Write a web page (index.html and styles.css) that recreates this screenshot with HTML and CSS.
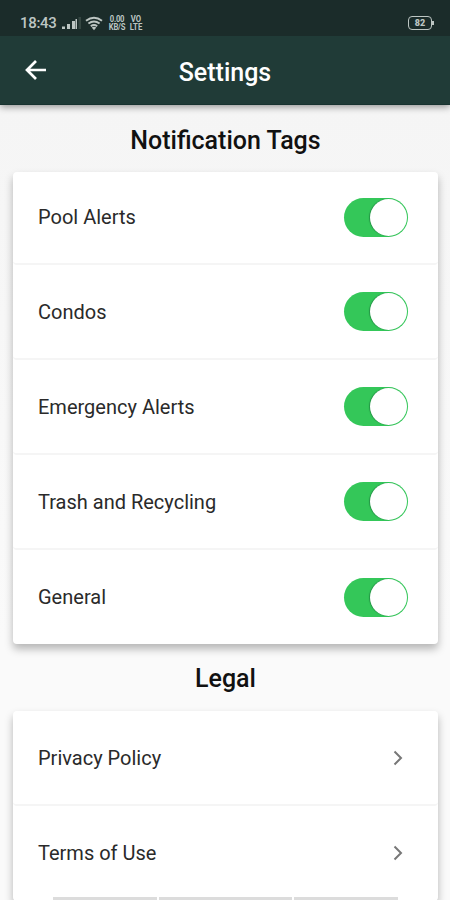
FILE: index.html
```html
<!DOCTYPE html>
<html lang="en">
<head>
<meta charset="utf-8">
<title>Settings</title>
<link rel="stylesheet" href="styles.css">
</head>
<body>
<div class="screen">
  <header class="header">
    <div class="status">
      <span class="clock">18:43</span>
      <svg class="signal" width="19" height="13" viewBox="0 0 19 13"><path d="M0 9.500h3V12H0zM5 7h3v5H5zM10 4h3v8h-3zM13.500 2H15v10h-1.500z" fill="#bdc6c3"/><path d="M16.500 0H19v12h-2.500z" fill="#354642"/></svg>
      <svg class="wifi" width="18" height="15" viewBox="0 0 18 15"><g fill="none" stroke="#bdc6c3" stroke-width="1.900"><path d="M1 4.800q8-6.200 16 0"/><path d="M3.400 7.600q5.600-4.400 11.200 0"/><path d="M5.800 10.200q3.200-2.500 6.400 0"/></g><path d="M6.700 11.400q2.300-1.500 4.600 0L9 14.200z" fill="#bdc6c3"/></svg>
      <span class="stack rate"><span>0.00</span><span>KB/S</span></span>
      <span class="stack volte"><span>VO</span><span>LTE</span></span>
      <span class="battery"><span class="level">82</span></span>
    </div>
    <div class="appbar">
      <svg class="back" width="22" height="22" viewBox="0 0 22 22"><path d="M21 11H2.500M11 2L2 11l9 9" fill="none" stroke="#fff" stroke-width="2.700"/></svg>
      <h1 class="title">Settings</h1>
    </div>
  </header>
  <main class="content">
    <h2 class="heading tags">Notification Tags</h2>
    <section class="card alerts">
      <div class="row"><span class="label">Pool Alerts</span><span class="toggle"></span></div>
      <div class="row"><span class="label">Condos</span><span class="toggle"></span></div>
      <div class="row"><span class="label">Emergency Alerts</span><span class="toggle"></span></div>
      <div class="row"><span class="label">Trash and Recycling</span><span class="toggle"></span></div>
      <div class="row"><span class="label">General</span><span class="toggle"></span></div>
    </section>
    <h2 class="heading legal">Legal</h2>
    <section class="card links">
      <div class="row"><span class="label">Privacy Policy</span><svg class="chevron" width="10" height="16" viewBox="0 0 10 16"><path d="M1.500 1.500L8 8l-6.500 6.500" fill="none" stroke="#777" stroke-width="2"/></svg></div>
      <div class="row"><span class="label">Terms of Use</span><svg class="chevron" width="10" height="16" viewBox="0 0 10 16"><path d="M1.500 1.500L8 8l-6.500 6.500" fill="none" stroke="#777" stroke-width="2"/></svg></div>
    </section>
  </main>
  <div class="tabs"><span></span><span></span><span></span></div>
</div>
</body>
</html>
```

FILE: styles.css
```css
* { box-sizing: border-box; }
body { margin: 0; font-family: Roboto, sans-serif; color: #2a2a2a; }
.screen { position: relative; width: 450px; height: 900px; overflow: hidden; background: linear-gradient(#f5f5f5 105px, #fafafa 640px); }
.header { position: relative; z-index: 1; height: 105px; background: #203b37; border-bottom: 1px solid #183330; box-shadow: 0 2px 7px rgba(0,0,0,.4); }
.status { display: flex; align-items: center; height: 36px; padding: 10px 18px 0 20px; background: #1b2c2a; color: #bdc6c3; }
.clock { width: 42px; font-size: 15px; font-weight: 500; letter-spacing: -.3px; }
.signal { margin-top: 1px; }
.wifi { margin-left: 4px; }
.stack { display: flex; flex-direction: column; align-items: center; font-size: 9px; font-weight: 700; line-height: 8px; }
.rate { width: 18px; margin-left: 5px; letter-spacing: -.3px; transform: scaleX(.85); }
.volte { width: 14px; margin-left: 3px; transform: scaleX(.86); }
.battery { position: relative; display: flex; align-items: center; justify-content: center; width: 24px; height: 14px; margin-left: auto; border: 1.500px solid #bdc6c3; border-radius: 4px; }
.battery::after { content: ""; position: absolute; right: -3px; top: 4px; width: 2px; height: 4px; background: #bdc6c3; }
.level { font-size: 9px; font-weight: 900; line-height: 10px; }
.appbar { display: grid; grid-template-columns: 48px 1fr 48px; align-items: center; height: 68px; }
.back { margin-left: 25px; }
.title { margin: 4px 0 0; color: #fff; text-align: center; font-size: 25px; font-weight: 500; }
.content { padding: 0 12px 0 13px; }
.heading { display: flex; align-items: center; justify-content: center; height: 67px; margin: 0; color: #111; font-size: 25px; font-weight: 500; }
.tags { padding-top: 3px; }
.legal { padding-top: 1px; }
.card { border-radius: 4px; background: #fff; box-shadow: 0 5px 8px rgba(0,0,0,.28); }
.row { display: flex; align-items: center; justify-content: space-between; height: 95px; padding: 0 30px 0 25px; border-bottom: 2px solid #f5f5f5; border-radius: 4px; }
.alerts .row:first-child { height: 93px; padding-bottom: 1px; }
.alerts .row:last-child { height: 94px; border-bottom: 0; }
.links .row:last-child { border-bottom-color: transparent; }
.label { font-size: 20px; }
.toggle { display: flex; justify-content: flex-end; width: 64px; height: 39px; padding: 1px; border-radius: 20px; background: #34c759; }
.toggle::before { content: ""; width: 37px; height: 37px; border-radius: 50%; background: #fff; box-shadow: -1px 0 1px #239445; }
.chevron { margin-right: 5px; }
.tabs { position: absolute; left: 53px; top: 897px; display: grid; grid-template-columns: 104px 133px 104px; gap: 2px; width: 345px; height: 3px; }
.tabs span { background: #dcdcdc; }
```
